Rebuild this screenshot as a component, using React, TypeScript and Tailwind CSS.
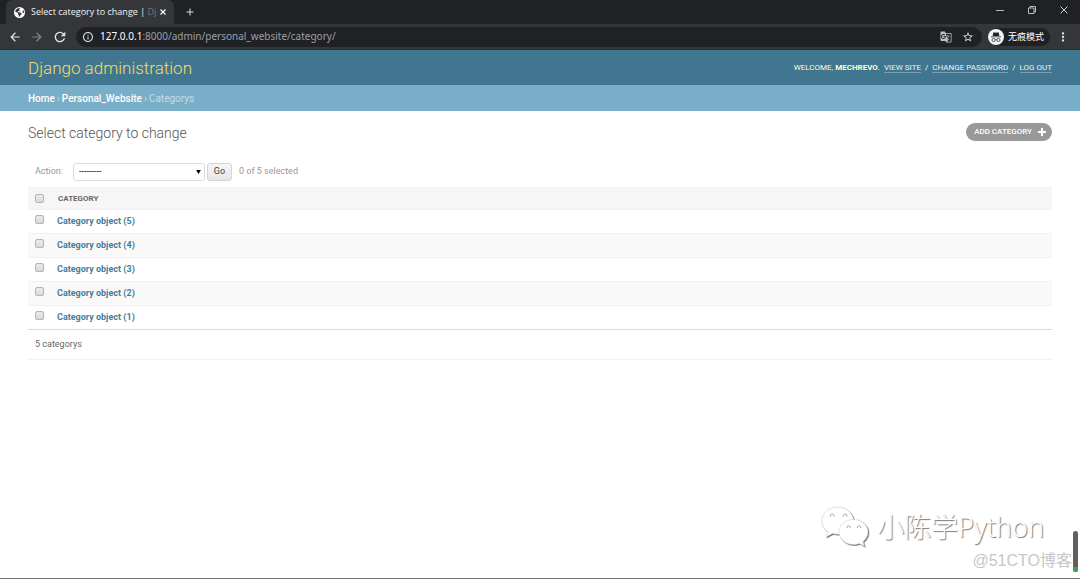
import { FaEarthAmericas } from 'react-icons/fa6';
import { MdArrowBack, MdArrowForward, MdRefresh, MdInfoOutline, MdStarBorder, MdMoreVert, MdAdd, MdGTranslate } from 'react-icons/md';

const categories = [5, 4, 3, 2, 1];

const checkbox =
  'block size-[9px] appearance-none rounded-[2px] border border-[#b4b4b4] bg-gradient-to-b from-[#ededed] to-[#d8d8d8] checked:bg-[#417690]';

function TabStrip() {
  return (
    <div className="flex h-6 items-stretch bg-[#202124] pl-1.5 text-[#dee1e6]">
      <div className="flex w-[168px] items-center rounded-t-md bg-[#35363a] pr-2 pl-2">
        <FaEarthAmericas className="size-[11px] shrink-0 text-white" />
        <span className="ml-1.5 font-['Open_Sans','Noto_Sans_CJK_SC',sans-serif] text-[9px] whitespace-nowrap text-[#f1f3f4]">
          Select category to change | <span className="text-[#77787b]">Dj</span>
        </span>
        <button aria-label="Close tab" className="ml-auto">
          <svg viewBox="0 0 6 6" className="size-1.5" stroke="#fff" strokeWidth="1.2" fill="none">
            <path d="M.5.5l5 5M5.500.5l-5 5" />
          </svg>
        </button>
      </div>
      <button aria-label="New tab" className="ml-2.5">
        <MdAdd className="size-3" />
      </button>
      <div className="ml-auto flex items-center gap-6 pr-3 pb-1">
        <button aria-label="Minimize">
          <svg viewBox="0 0 8 8" className="size-2" stroke="currentColor" strokeWidth=".8" fill="none">
            <path d="M0 4.5h8" />
          </svg>
        </button>
        <button aria-label="Restore">
          <svg viewBox="0 0 8 8" className="size-2" stroke="currentColor" strokeWidth=".8" fill="none">
            <path d="M.5 2h5.500v5.500H.5zM2 2V.5h5.500V6H6" />
          </svg>
        </button>
        <button aria-label="Close">
          <svg viewBox="0 0 8 8" className="size-2" stroke="currentColor" strokeWidth=".9" fill="none">
            <path d="M.5.5l7 7M7.500.5l-7 7" />
          </svg>
        </button>
      </div>
    </div>
  );
}

function Toolbar() {
  return (
    <div className="flex h-[26px] items-center border-b border-[#292a2d] bg-[#35363a] pr-2.5 pl-2 text-[#dee1e6]">
      <button aria-label="Back" className="mr-2">
        <MdArrowBack className="size-3.5" />
      </button>
      <button aria-label="Forward" className="mr-2 text-[#85868a]">
        <MdArrowForward className="size-3.5" />
      </button>
      <button aria-label="Reload" className="mr-2">
        <MdRefresh className="size-4" />
      </button>
      <div className="flex h-5 grow items-center rounded-full bg-[#202124] pr-2 pl-1.5">
        <MdInfoOutline className="mr-1.5 size-3 shrink-0" />
        <span className="font-['Noto_Sans',sans-serif] text-[10px] text-[#9aa0a6]">
          <span className="text-white">127.0.0.1</span>:8000/admin/personal_website/category/
        </span>
        <button aria-label="Translate" className="ml-auto">
          <MdGTranslate className="size-3 text-[#bdc1c6]" />
        </button>
        <button aria-label="Bookmark" className="ml-2.5">
          <MdStarBorder className="size-3" />
        </button>
      </div>
      <div className="ml-1.5 flex h-[18px] items-center rounded-full bg-[#202124] pr-1.5">
        <svg viewBox="0 0 16 16" className="mr-1 size-4">
          <circle cx="8" cy="8" r="8" fill="#f1f3f4" />
          <path d="M5.500 3.300 8 3.800l2.500-.5.900 3.700H4.600zM3 7.500h10v.8H3z" fill="#202124" />
          <path d="M7.200 10.800q.8-.6 1.600 0" fill="none" stroke="#202124" strokeWidth=".7" />
          <circle cx="5.600" cy="11" r="1.600" fill="none" stroke="#202124" strokeWidth=".7" />
          <circle cx="10.400" cy="11" r="1.600" fill="none" stroke="#202124" strokeWidth=".7" />
        </svg>
        <span className="font-['Noto_Sans_CJK_SC',sans-serif] text-[9px] text-white">无痕模式</span>
      </div>
      <button aria-label="Menu" className="ml-1.5">
        <MdMoreVert className="size-3.5" />
      </button>
    </div>
  );
}

function SiteHeader() {
  const link = 'border-b border-white/30 leading-[9px] text-white/90';
  return (
    <header>
      <div className="flex h-[35px] items-center justify-between bg-[#417690] px-7">
        <h1 className="text-[17px] leading-6 font-light text-[#f5dd5d]">Django administration</h1>
        <div className="flex items-center gap-x-1 text-[8px] text-[#ffc]">
          <span>
            WELCOME, <strong className="font-bold">MECHREVO</strong>.
          </span>
          <a href="#site" className={link}>VIEW SITE</a>
          <span>/</span>
          <a href="#password" className={link}>CHANGE PASSWORD</a>
          <span>/</span>
          <a href="#logout" className={link}>LOG OUT</a>
        </div>
      </div>
      <nav className="flex h-[26px] items-center gap-[2px] bg-[#79aec8] px-7 text-[10px] text-[#c4dce8]">
        <a href="#home" className="font-medium text-white">Home</a>
        <span>›</span>
        <a href="#app" className="font-medium text-white">Personal_Website</a>
        <span>›</span>
        <span>Categorys</span>
      </nav>
    </header>
  );
}

function ChangeList() {
  return (
    <main className="px-7 pt-3">
      <div className="flex items-start justify-between">
        <h2 className="text-[14px] leading-5 font-light text-[#555]">Select category to change</h2>
        <a
          href="#add"
          className="flex h-[18px] items-center gap-1.5 rounded-full bg-[#999] pr-1.5 pl-2 text-[8px] font-medium text-white"
        >
          ADD CATEGORY
          <svg viewBox="0 0 8 8" className="size-2">
            <path d="M3 0h2v3h3v2H5v3H3V5H0V3h3z" fill="#fff" />
          </svg>
        </a>
      </div>

      <form onSubmit={(e) => e.preventDefault()}>
        <div className="mt-5 mb-1.5 flex items-center pl-[7px] text-[9px] text-[#999]">
          <label htmlFor="action" className="mr-2.5">Action:</label>
          <div className="relative">
            <select
              id="action"
              className="block h-[18px] w-[132px] appearance-none rounded-[3px] border border-[#ddd] bg-white pl-[5px] text-[9px] text-black"
            >
              <option>---------</option>
              <option>Delete selected categorys</option>
            </select>
            <svg viewBox="0 0 6 5" className="pointer-events-none absolute top-[7px] right-1 h-1 w-[5px]">
              <path d="M0 0h6L3 5z" fill="#000" />
            </svg>
          </div>
          <button className="ml-[2px] h-[18px] w-[25px] rounded-[3px] border border-[#d5d5d5] bg-gradient-to-b from-[#f6f6f6] to-[#e6e6e6] text-[#444]">
            Go
          </button>
          <span className="ml-[7px]">0 of 5 selected</span>
        </div>

        <table className="w-full border-collapse text-left">
          <thead>
            <tr className="h-[22px] border-y border-[#f2f2f2] bg-[#f6f6f6]">
              <th className="w-[29px] pl-[7px]">
                <input type="checkbox" aria-label="Select all" className={checkbox} />
              </th>
              <th className="pl-px text-[8px] font-bold text-[#666]">CATEGORY</th>
            </tr>
          </thead>
          <tbody>
            {categories.map((id) => (
              <tr key={id} className="h-6 border-b border-[#f0f0f0] last:border-[#ddd] even:bg-[#f9f9f9]">
                <td className="pb-1 pl-[7px]">
                  <input type="checkbox" aria-label={`Select category ${id}`} className={checkbox} />
                </td>
                <th className="pb-px text-[9px] leading-3 font-bold text-[#447e9b]">
                  <a href={`#category-${id}`}>Category object ({id})</a>
                </th>
              </tr>
            ))}
          </tbody>
        </table>

        <p className="flex h-[30px] items-center border-b border-[#f2f2f2] pl-[7px] text-[9px] text-[#666]">
          5 categorys
        </p>
      </form>
    </main>
  );
}

function Watermark() {
  return (
    <div className="pointer-events-none absolute right-0 bottom-0 h-[80px] w-[265px]">
      <div className="absolute right-9 bottom-[30px] flex items-center gap-2">
        <svg
          viewBox="0 0 48 42"
          className="h-[42px] w-12 drop-shadow-[1px_1px_0_#777]"
          fill="#fff"
          stroke="#ccc"
          strokeWidth=".6"
        >
          <path d="M16.500 1C8 1 .8 7 .8 15c0 4.500 2 8 5.700 10.500L5 31l6.500-3.500c11 3 21-3 21-12.500C32.500 7 25 1 16.500 1z" />
          <path d="M32.500 13.500c-8.500 0-14.500 5.800-14.500 12.500s6 12.500 14.500 12.500c2.200 0 4-.3 5.800-1l5 2.800-1.300-4.600C45 33 47 30 47 26c0-6.700-6-12.500-14.500-12.500z" />
          <path
            d="M9.500 10.500a1.800 1.800 0 1 1 3.400 0M22.500 10.500a1.800 1.800 0 1 1 3.400 0M26 22a1.600 1.600 0 1 1 3 0M36.500 22a1.600 1.600 0 1 1 3 0"
            fill="none"
            stroke="#888"
            strokeWidth=".8"
          />
        </svg>
        <span className="font-['Noto_Sans','Noto_Sans_CJK_SC',sans-serif] text-[27px] leading-10 font-light whitespace-nowrap text-white [text-shadow:1px_1px_1px_#777]">
          小陈学Python
        </span>
      </div>
      <span className="absolute right-2 bottom-[5px] font-['Liberation_Sans','Noto_Sans_CJK_SC',sans-serif] text-[16px] leading-6 whitespace-nowrap text-[#c6c6c6]">
        @51CTO博客
      </span>
      <div className="absolute right-0.5 bottom-1.5 flex h-[41px] w-[5px] flex-col justify-end overflow-hidden rounded-full bg-[#606060]">
        <div className="h-[5px] bg-[#43a057]" />
      </div>
    </div>
  );
}

export default function App() {
  return (
    <div className="relative flex min-h-screen flex-col border-b border-[#777] bg-white font-[Roboto,'Noto_Sans_CJK_SC',sans-serif]">
      <TabStrip />
      <Toolbar />
      <SiteHeader />
      <ChangeList />
      <Watermark />
    </div>
  );
}
